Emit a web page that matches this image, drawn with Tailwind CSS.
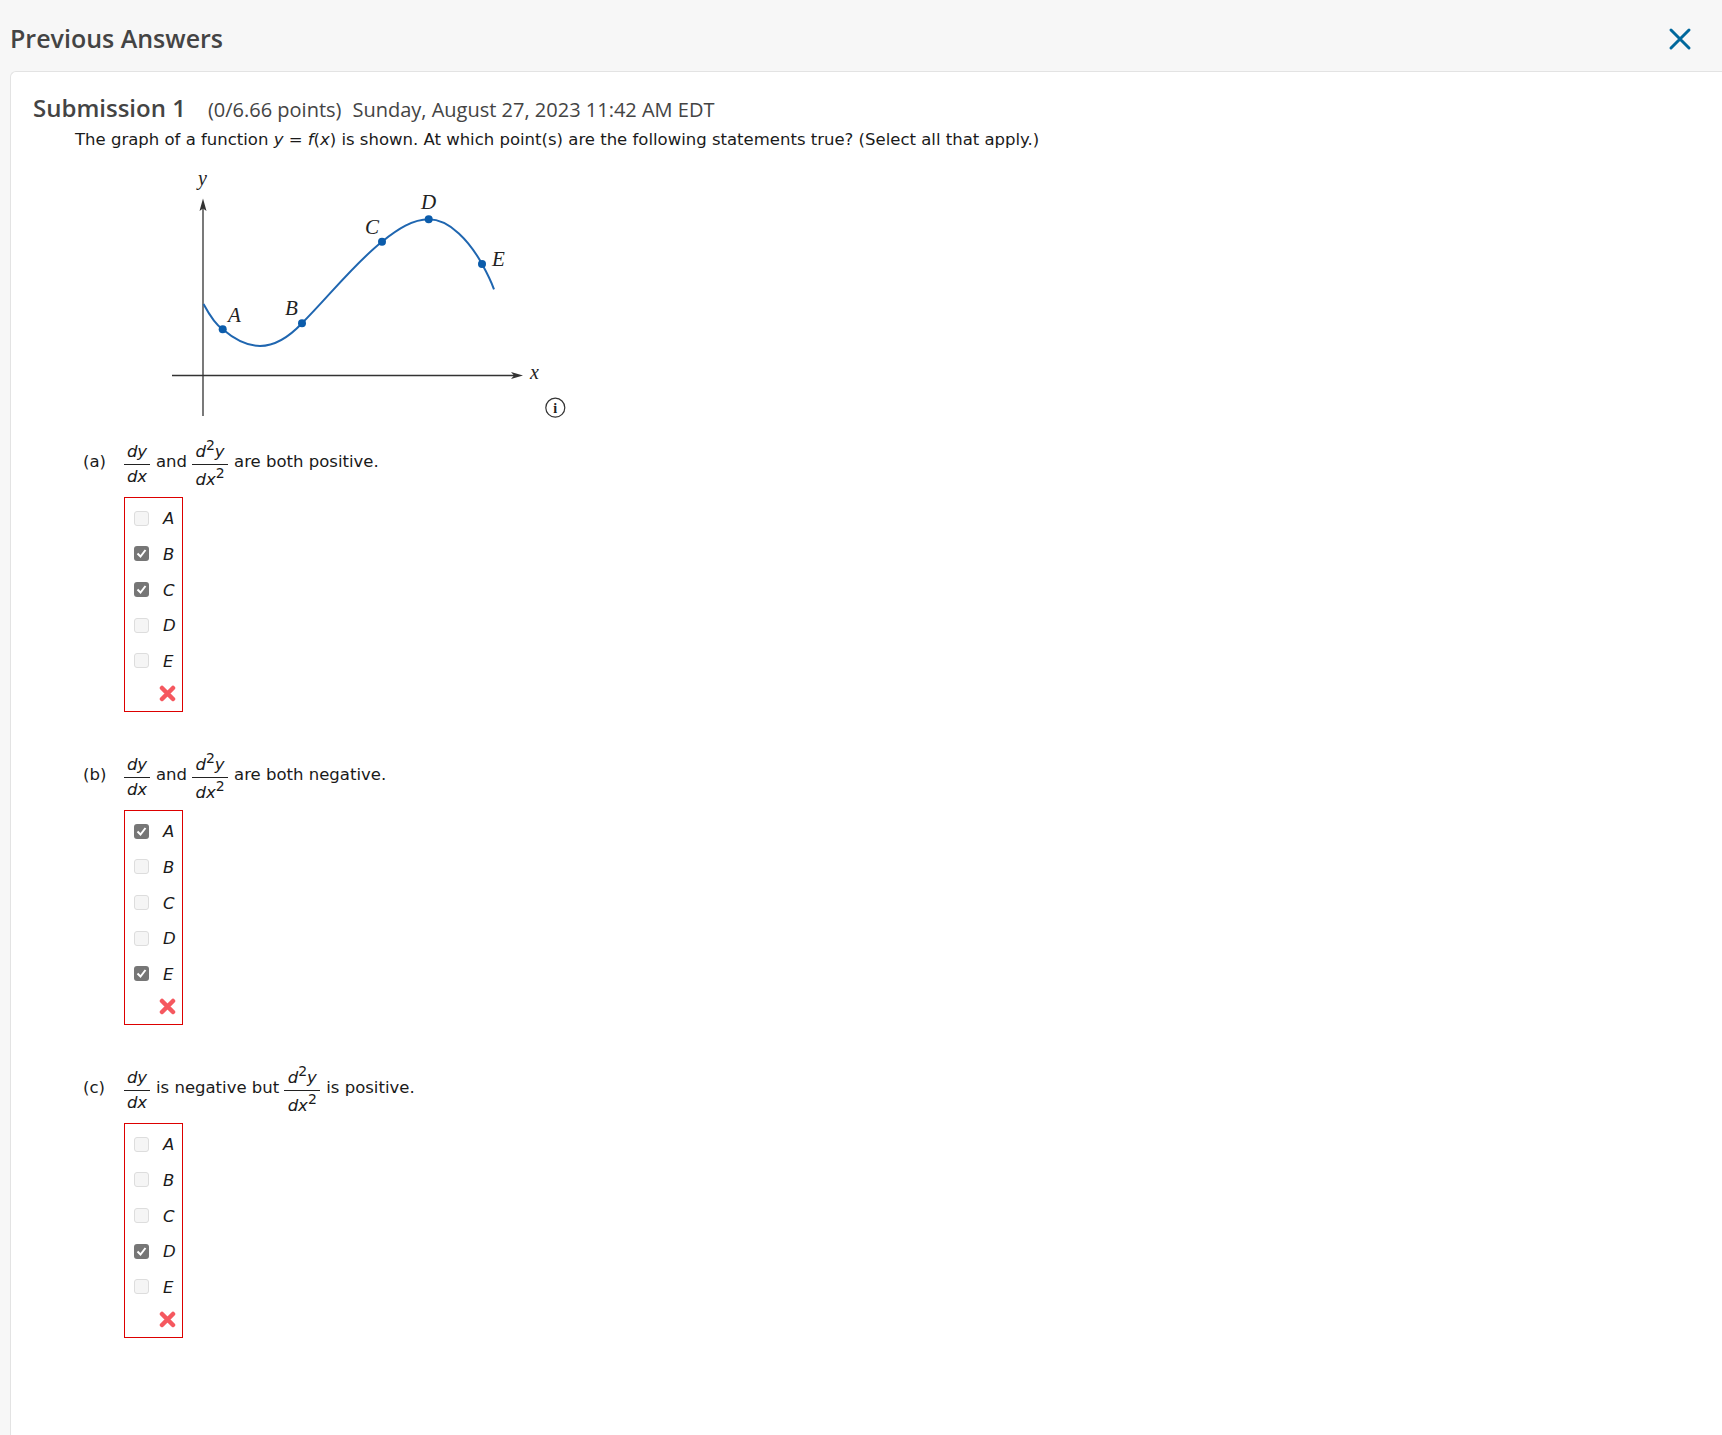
<!DOCTYPE html>
<html><head><meta charset="utf-8"><script src="https://cdn.jsdelivr.net/npm/@tailwindcss/browser@4"></script></head>
<body class="bg-[#f7f7f7] w-[1722px] h-[1435px] overflow-hidden font-['DejaVu_Sans',sans-serif] text-[16.500px] text-[#1a1a1a]">
<header class="h-[71px] flex items-center justify-between pt-[7px] pl-[10px] pr-[30px]">
<h1 class="font-['Open_Sans',sans-serif] font-semibold text-[25px] text-[#444]">Previous Answers</h1>
<svg width="24" height="24" viewBox="0 0 24 24"><path d="M3 3L21 21M21 3L3 21" stroke="#00689c" stroke-width="3" stroke-linecap="round"/></svg>
</header>
<main class="ml-[10px] h-[1364px] bg-white border-l border-t border-[#e3e3e3] rounded-tl-[6px] pl-[22px] pt-[18px]">
<div class="flex items-baseline font-['Open_Sans',sans-serif] text-[#444] h-[34px]">
<span class="font-semibold text-[24px]">Submission 1</span>
<span class="ml-[22px] text-[20px]">(0/6.66 points)</span>
<span class="ml-[11px] text-[20px]">Sunday, August 27, 2023 11:42 AM EDT</span>
</div>
<div class="pl-[42px] mt-[4px]">
<p class="h-[24px] leading-[24px] whitespace-nowrap">The graph of a function <i>y</i> = <i>f</i>(<i>x</i>) is shown. At which point(s) are the following statements true? (Select all that apply.)</p>
<div class="relative h-[267px] mt-[8px]">
<svg class="absolute left-[75px] top-0" width="440" height="270" viewBox="0 0 440 270">
<path d="M53 42V256M22 215.500H366" stroke="#333" stroke-width="1.300" fill="none"/>
<path d="M53 38.500L49.500 51L53 48.500L56.500 51Z" fill="#333"/>
<path d="M373 215.500L361 212L364 215.500L361 219Z" fill="#333"/>
<path d="M53.500 144C60 156 66 165 72.700 169.300C84 179 96 186 110 186C125 186 140 176 152 163.300C180 135 205 103 232 81.700C248 69 263 59.300 278.700 59.300C300 59.300 320 82 332 104C337 113 341 121 344 129.300" stroke="#1f66b0" stroke-width="2" fill="none"/>
<g fill="#0b5cab"><circle cx="72.700" cy="169.300" r="4"/><circle cx="152" cy="163.300" r="4"/><circle cx="232" cy="81.700" r="4"/><circle cx="278.700" cy="59.300" r="4"/><circle cx="332" cy="104" r="4"/></g>
<g font-family="Liberation Serif" font-style="italic" font-size="21" fill="#222">
<text x="48" y="25" font-size="20">y</text><text x="78" y="162">A</text><text x="135" y="155">B</text><text x="215" y="74">C</text><text x="271" y="49">D</text><text x="342" y="106">E</text><text x="380" y="219" font-size="20">x</text>
</g>
<circle cx="405.300" cy="247.700" r="9.500" fill="#fff" stroke="#333" stroke-width="1.200"/>
<text x="405.300" y="252.500" text-anchor="middle" font-family="Liberation Serif" font-weight="700" font-size="14" fill="#222">i</text>
</svg>
</div>
<section class="h-[313px]">
<div class="flex items-center h-[70px] pl-[8px]">
<span class="w-[41px]">(a)</span>
<span class="flex flex-col w-[26px] mr-[6px] text-center"><span class="border-b border-[#222] h-[29px] leading-[24px] flex items-end justify-center"><i>dy</i></span><i class="leading-[23px] h-[23px]">dx</i></span>
<span>and</span>
<span class="flex flex-col w-[36px] ml-[5px] mr-[6px] text-center"><span class="border-b border-[#222] h-[29px] leading-[24px] flex items-end justify-center"><span><i>d</i><sup class="text-[14px] -top-[7px]">2</sup><i>y</i></span></span><span class="leading-[23px] h-[23px] pt-[3px]"><i>dx</i><sup class="text-[14px] -top-[7px]">2</sup></span></span>
<span>are both positive.</span>
</div>
<div class="ml-[49px] w-[59px] h-[215px] border border-[#d00] flex flex-col pt-[2.500px]">
<label class="flex items-center h-[35.600px]"><span class="ml-[9px] w-[15px] h-[15px] rounded-[3px] bg-[#f5f5f5] border border-[#ddd]"></span><i class="ml-[14px] mt-[3px]">A</i></label>
<label class="flex items-center h-[35.600px]"><span class="ml-[9px] w-[15px] h-[15px] rounded-[3px] bg-[#767676] flex items-center justify-center"><svg width="11" height="11" viewBox="0 0 11 11"><path d="M1.500 5.500L4.500 8.500L9.500 2" fill="none" stroke="#fff" stroke-width="2"/></svg></span><i class="ml-[14px] mt-[3px]">B</i></label>
<label class="flex items-center h-[35.600px]"><span class="ml-[9px] w-[15px] h-[15px] rounded-[3px] bg-[#767676] flex items-center justify-center"><svg width="11" height="11" viewBox="0 0 11 11"><path d="M1.500 5.500L4.500 8.500L9.500 2" fill="none" stroke="#fff" stroke-width="2"/></svg></span><i class="ml-[14px] mt-[3px]">C</i></label>
<label class="flex items-center h-[35.600px]"><span class="ml-[9px] w-[15px] h-[15px] rounded-[3px] bg-[#f5f5f5] border border-[#ddd]"></span><i class="ml-[14px] mt-[3px]">D</i></label>
<label class="flex items-center h-[35.600px]"><span class="ml-[9px] w-[15px] h-[15px] rounded-[3px] bg-[#f5f5f5] border border-[#ddd]"></span><i class="ml-[14px] mt-[3px]">E</i></label>
<svg class="ml-[34px] mt-[7px]" width="17" height="17" viewBox="0 0 17 17"><path d="M3 3L14 14M14 3L3 14" stroke="#f5585f" stroke-width="4.500" stroke-linecap="round"/></svg>
</div>
</section>
<section class="h-[313px]">
<div class="flex items-center h-[70px] pl-[8px]">
<span class="w-[41px]">(b)</span>
<span class="flex flex-col w-[26px] mr-[6px] text-center"><span class="border-b border-[#222] h-[29px] leading-[24px] flex items-end justify-center"><i>dy</i></span><i class="leading-[23px] h-[23px]">dx</i></span>
<span>and</span>
<span class="flex flex-col w-[36px] ml-[5px] mr-[6px] text-center"><span class="border-b border-[#222] h-[29px] leading-[24px] flex items-end justify-center"><span><i>d</i><sup class="text-[14px] -top-[7px]">2</sup><i>y</i></span></span><span class="leading-[23px] h-[23px] pt-[3px]"><i>dx</i><sup class="text-[14px] -top-[7px]">2</sup></span></span>
<span>are both negative.</span>
</div>
<div class="ml-[49px] w-[59px] h-[215px] border border-[#d00] flex flex-col pt-[2.500px]">
<label class="flex items-center h-[35.600px]"><span class="ml-[9px] w-[15px] h-[15px] rounded-[3px] bg-[#767676] flex items-center justify-center"><svg width="11" height="11" viewBox="0 0 11 11"><path d="M1.500 5.500L4.500 8.500L9.500 2" fill="none" stroke="#fff" stroke-width="2"/></svg></span><i class="ml-[14px] mt-[3px]">A</i></label>
<label class="flex items-center h-[35.600px]"><span class="ml-[9px] w-[15px] h-[15px] rounded-[3px] bg-[#f5f5f5] border border-[#ddd]"></span><i class="ml-[14px] mt-[3px]">B</i></label>
<label class="flex items-center h-[35.600px]"><span class="ml-[9px] w-[15px] h-[15px] rounded-[3px] bg-[#f5f5f5] border border-[#ddd]"></span><i class="ml-[14px] mt-[3px]">C</i></label>
<label class="flex items-center h-[35.600px]"><span class="ml-[9px] w-[15px] h-[15px] rounded-[3px] bg-[#f5f5f5] border border-[#ddd]"></span><i class="ml-[14px] mt-[3px]">D</i></label>
<label class="flex items-center h-[35.600px]"><span class="ml-[9px] w-[15px] h-[15px] rounded-[3px] bg-[#767676] flex items-center justify-center"><svg width="11" height="11" viewBox="0 0 11 11"><path d="M1.500 5.500L4.500 8.500L9.500 2" fill="none" stroke="#fff" stroke-width="2"/></svg></span><i class="ml-[14px] mt-[3px]">E</i></label>
<svg class="ml-[34px] mt-[7px]" width="17" height="17" viewBox="0 0 17 17"><path d="M3 3L14 14M14 3L3 14" stroke="#f5585f" stroke-width="4.500" stroke-linecap="round"/></svg>
</div>
</section>
<section class="h-[313px]">
<div class="flex items-center h-[70px] pl-[8px]">
<span class="w-[41px]">(c)</span>
<span class="flex flex-col w-[26px] mr-[6px] text-center"><span class="border-b border-[#222] h-[29px] leading-[24px] flex items-end justify-center"><i>dy</i></span><i class="leading-[23px] h-[23px]">dx</i></span>
<span>is negative but</span>
<span class="flex flex-col w-[36px] ml-[5px] mr-[6px] text-center"><span class="border-b border-[#222] h-[29px] leading-[24px] flex items-end justify-center"><span><i>d</i><sup class="text-[14px] -top-[7px]">2</sup><i>y</i></span></span><span class="leading-[23px] h-[23px] pt-[3px]"><i>dx</i><sup class="text-[14px] -top-[7px]">2</sup></span></span>
<span>is positive.</span>
</div>
<div class="ml-[49px] w-[59px] h-[215px] border border-[#d00] flex flex-col pt-[2.500px]">
<label class="flex items-center h-[35.600px]"><span class="ml-[9px] w-[15px] h-[15px] rounded-[3px] bg-[#f5f5f5] border border-[#ddd]"></span><i class="ml-[14px] mt-[3px]">A</i></label>
<label class="flex items-center h-[35.600px]"><span class="ml-[9px] w-[15px] h-[15px] rounded-[3px] bg-[#f5f5f5] border border-[#ddd]"></span><i class="ml-[14px] mt-[3px]">B</i></label>
<label class="flex items-center h-[35.600px]"><span class="ml-[9px] w-[15px] h-[15px] rounded-[3px] bg-[#f5f5f5] border border-[#ddd]"></span><i class="ml-[14px] mt-[3px]">C</i></label>
<label class="flex items-center h-[35.600px]"><span class="ml-[9px] w-[15px] h-[15px] rounded-[3px] bg-[#767676] flex items-center justify-center"><svg width="11" height="11" viewBox="0 0 11 11"><path d="M1.500 5.500L4.500 8.500L9.500 2" fill="none" stroke="#fff" stroke-width="2"/></svg></span><i class="ml-[14px] mt-[3px]">D</i></label>
<label class="flex items-center h-[35.600px]"><span class="ml-[9px] w-[15px] h-[15px] rounded-[3px] bg-[#f5f5f5] border border-[#ddd]"></span><i class="ml-[14px] mt-[3px]">E</i></label>
<svg class="ml-[34px] mt-[7px]" width="17" height="17" viewBox="0 0 17 17"><path d="M3 3L14 14M14 3L3 14" stroke="#f5585f" stroke-width="4.500" stroke-linecap="round"/></svg>
</div>
</section>
</div>
</main>
</body></html>
